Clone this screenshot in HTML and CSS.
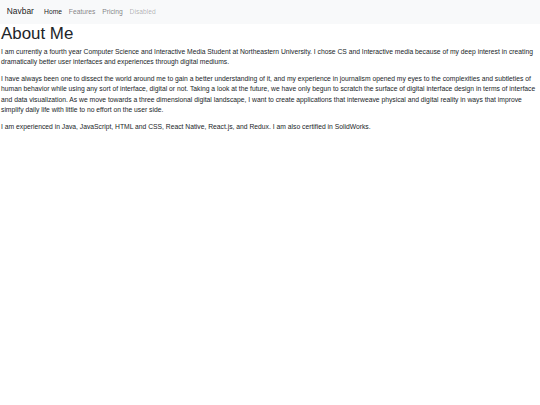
FILE: index.html
```html
<!DOCTYPE html>
<html lang="en">
<head>
<meta charset="utf-8">
<title>About Me</title>
<link rel="stylesheet" href="styles.css">
</head>
<body>
<nav class="navbar">
  <a class="brand" href="#">Navbar</a>
  <ul class="nav">
    <li><a class="nav-link active" href="#">Home</a></li>
    <li><a class="nav-link" href="#">Features</a></li>
    <li><a class="nav-link" href="#">Pricing</a></li>
    <li><a class="nav-link disabled" href="#">Disabled</a></li>
  </ul>
</nav>
<main class="content">
  <h1 class="title">About Me</h1>
  <p>I am currently a fourth year Computer Science and Interactive Media Student at Northeastern University. I chose CS and Interactive media because of my deep interest in creating dramatically better user interfaces and experiences through digital mediums.</p>
  <p>I have always been one to dissect the world around me to gain a better understanding of it, and my experience in journalism opened my eyes to the complexities and subtleties of human behavior while using any sort of interface, digital or not. Taking a look at the future, we have only begun to scratch the surface of digital interface design in terms of interface and data visualization. As we move towards a three dimensional digital landscape, I want to create applications that interweave physical and digital reality in ways that improve simplify daily life with little to no effort on the user side.</p>
  <p>I am experienced in Java, JavaScript, HTML and CSS, React Native, React.js, and Redux. I am also certified in SolidWorks.</p>
</main>
</body>
</html>
```

FILE: styles.css
```css
* { box-sizing: border-box; }
html, body { margin: 0; padding: 0; }
body {
  font-family: "Liberation Sans", Arial, sans-serif;
  font-size: 6.75px;
  line-height: 1.5;
  color: #212529;
  background: #fff;
}
.navbar {
  display: flex;
  align-items: center;
  background: #f8f9fa;
  padding: 3.375px 6.75px;
}
.brand {
  font-size: 8.44px;
  line-height: 1.5;
  padding: 2.1px 0;
  margin-right: 6.75px;
  color: rgba(0,0,0,.9);
  text-decoration: none;
}
.nav {
  display: flex;
  list-style: none;
  margin: 0;
  padding: 0;
}
.nav-link {
  display: block;
  padding: 3.375px;
  color: rgba(0,0,0,.5);
  text-decoration: none;
}
.nav-link.active { color: rgba(0,0,0,.9); }
.nav-link.disabled { color: rgba(0,0,0,.3); }
.content { padding: 0 1px; }
.title {
  font-size: 16.9px;
  font-weight: 500;
  line-height: 1.2;
  margin: 0 0 3.375px;
}
p { margin: 0 0 6.75px; }
```
